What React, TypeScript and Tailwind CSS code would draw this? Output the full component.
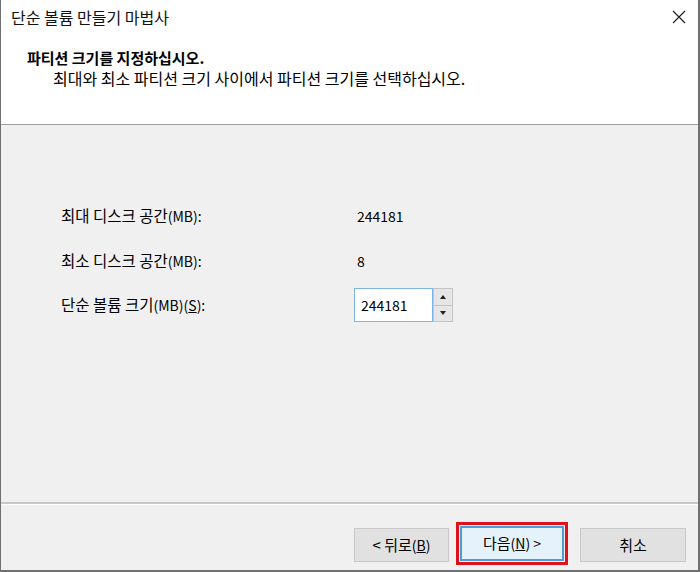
import React from "react";

const font = { fontFamily: '"Noto Sans CJK KR", "Noto Sans", sans-serif' };

export default function App() {
  return (
    <div
      className="w-[700px] h-[572px] bg-[#f0f0f0] border-l border-r-2 border-b-2 border-[#707070] flex flex-col text-black overflow-hidden"
      style={font}
    >
      <div className="h-[124px] bg-white flex flex-col shrink-0">
        <div className="h-[34px] flex items-center justify-between pl-[10px] pr-[9px]">
          <span className="text-[16px] leading-none text-[#111]">단순 볼륨 만들기 마법사</span>
          <svg width="14" height="14" viewBox="0 0 14 14" className="mr-[3px]">
            <path d="M1 1 L13 13 M13 1 L1 13" stroke="#1a1a1a" strokeWidth="1.1" fill="none" />
          </svg>
        </div>
        <div className="pl-[26px] pt-[14px] text-[15px] font-bold leading-[20px]">파티션 크기를 지정하십시오.</div>
        <div className="pl-[52px] text-[16px] leading-[21px]">최대와 최소 파티션 크기 사이에서 파티션 크기를 선택하십시오.</div>
      </div>
      <div className="h-px bg-[#a0a0a0] shrink-0" />
      <div className="flex-1 pl-[60px] pt-[79px] text-[15.5px]">
        <div className="flex items-center h-[24px]">
          <span className="w-[296px]">
            최대 디스크 공간<span className="text-[14px]">(MB):</span>
          </span>
          <span className="text-[14px]">244181</span>
        </div>
        <div className="flex items-center h-[24px] mt-[21px]">
          <span className="w-[296px]">
            최소 디스크 공간<span className="text-[14px]">(MB):</span>
          </span>
          <span className="text-[14px]">8</span>
        </div>
        <div className="flex items-center h-[34px] mt-[15px]">
          <span className="w-[293px]">
            단순 볼륨 크기<span className="text-[14px]">(MB)(<span className="underline">S</span>):</span>
          </span>
          <div className="flex h-[34px]">
            <div className="w-[79px] h-[34px] bg-white border border-[#7eb4ea] flex items-center pl-[6px] text-[14px]">
              244181
            </div>
            <div className="w-[20px] h-[34px] flex flex-col">
              <div className="flex-1 bg-[#e6e6e6] border border-[#c4c4c4] flex items-center justify-center">
                <svg width="6" height="4" viewBox="0 0 6 4">
                  <path d="M0 4 L3 0 L6 4 Z" fill="#222" />
                </svg>
              </div>
              <div className="flex-1 bg-[#e6e6e6] border border-t-0 border-[#c4c4c4] flex items-center justify-center">
                <svg width="6" height="4" viewBox="0 0 6 4">
                  <path d="M0 0 L3 4 L6 0 Z" fill="#222" />
                </svg>
              </div>
            </div>
          </div>
        </div>
      </div>
      <div className="h-[2px] bg-[#c8c8c8] shrink-0" />
      <div className="h-px bg-white shrink-0" />
      <div className="h-[65px] flex items-start justify-end pr-[12px] pt-[17px] shrink-0 text-[15px]">
        <button className="mt-[6px] w-[95px] h-[34px] bg-[#e1e1e1] border border-[#c8c8c8] flex items-center justify-center">
          &lt; 뒤로<span className="text-[14px]">(<span className="underline">B</span>)</span>
        </button>
        <div className="ml-[7px] border-[3px] border-[#e0101b] p-px">
          <button className="w-[104px] h-[35px] bg-[#e5f1fb] border-2 border-[#4f9bd6] flex items-center justify-center">
            다음<span className="text-[14px]">(<span className="underline">N</span>) &gt;</span>
          </button>
        </div>
        <button className="mt-[6px] ml-[12px] w-[106px] h-[34px] bg-[#e1e1e1] border border-[#c8c8c8] flex items-center justify-center">
          취소
        </button>
      </div>
    </div>
  );
}
